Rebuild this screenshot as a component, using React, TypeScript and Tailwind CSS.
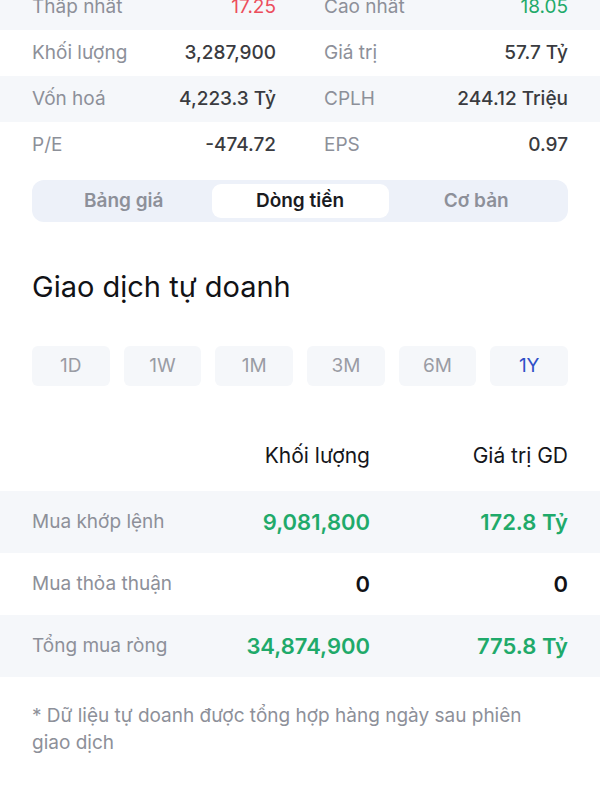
import React from "react";

const stats = [
  ["Thấp nhất", "17.25", "Cao nhất", "18.05"],
  ["Khối lượng", "3,287,900", "Giá trị", "57.7 Tỷ"],
  ["Vốn hoá", "4,223.3 Tỷ", "CPLH", "244.12 Triệu"],
  ["P/E", "-474.72", "EPS", "0.97"],
];

export default function App() {
  return (
    <div className="w-[600px] h-[800px] overflow-hidden bg-white" style={{ fontFamily: "Inter, 'Noto Sans', sans-serif" }}>
      <div className="-mt-[16px]">
        {stats.map((r, i) => (
          <div key={i} className={`h-[46px] flex items-center px-8 text-[19px] ${i % 2 === 0 ? "bg-[#f5f7fa]" : "bg-white"}`}>
            <div className="w-[244px] flex justify-between">
              <span className="text-[#8d9099]">{r[0]}</span>
              <span className={i === 0 ? "text-[#ec4d5c]" : "font-medium text-[#3a3b40]"}>{r[1]}</span>
            </div>
            <div className="ml-12 flex-1 flex justify-between">
              <span className="text-[#8d9099]">{r[2]}</span>
              <span className={i === 0 ? "text-[#1faa6a]" : "font-medium text-[#3a3b40]"}>{r[3]}</span>
            </div>
          </div>
        ))}
      </div>

      <div className="mx-8 mt-[12px] h-[42px] rounded-[12px] bg-[#edf1f9] p-[4px] flex text-[19px] font-semibold">
        <div className="flex-1 flex items-center justify-center text-[#8d9099]">Bảng giá</div>
        <div className="w-[177px] flex items-center justify-center bg-white rounded-[9px] text-[#1a1b1f]">Dòng tiền</div>
        <div className="flex-1 flex items-center justify-center text-[#8d9099]">Cơ bản</div>
      </div>

      <div className="px-8 mt-[45px] text-[29px] leading-[40px] text-[#111216]">Giao dịch tự doanh</div>

      <div className="px-8 mt-[39px] flex gap-[14px]">
        {["1D", "1W", "1M", "3M", "6M", "1Y"].map((p) => (
          <div key={p} className={`flex-1 h-[40px] rounded-[6px] bg-[#f5f7fa] flex items-center justify-center text-[19px] ${p === "1Y" ? "text-[#2f4fc7]" : "text-[#9a9ca4]"}`}>{p}</div>
        ))}
      </div>

      <div className="mt-[49px] px-8 h-[42px] flex items-center text-[21px] text-[#15161a]">
        <div className="flex-1" />
        <div className="w-[200px] text-right">Khối lượng</div>
        <div className="w-[198px] text-right">Giá trị GD</div>
      </div>

      <div className="mt-[14px]">
        {[
          ["Mua khớp lệnh", "9,081,800", "172.8 Tỷ", true],
          ["Mua thỏa thuận", "0", "0", false],
          ["Tổng mua ròng", "34,874,900", "775.8 Tỷ", true],
        ].map((r, i) => (
          <div key={i} className={`h-[62px] px-8 flex items-center ${i % 2 === 0 ? "bg-[#f5f7fa]" : "bg-white"}`}>
            <div className="flex-1 whitespace-nowrap text-[19px] text-[#8d9099]">{r[0] as string}</div>
            <div className={`w-[180px] text-right text-[22px] font-semibold ${r[3] ? "text-[#1faa6a]" : "text-[#111216]"}`}>{r[1] as string}</div>
            <div className={`w-[198px] text-right text-[22px] font-semibold ${r[3] ? "text-[#1faa6a]" : "text-[#111216]"}`}>{r[2] as string}</div>
          </div>
        ))}
      </div>

      <div className="px-8 mt-[25px] text-[19px] leading-[27px] text-[#8d9099] w-[560px]">
        * Dữ liệu tự doanh được tổng hợp hàng ngày sau phiên giao dịch
      </div>
    </div>
  );
}
